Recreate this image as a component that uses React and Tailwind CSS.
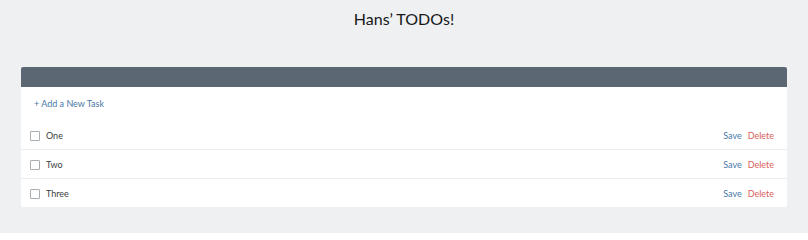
import React from 'react'

const tasks = ['One', 'Two', 'Three']

export default function App() {
  return (
    <div className="min-h-[233px] bg-[#eef0f2] px-[21px] pt-[7px] pb-[26px]" style={{ fontFamily: 'Lato, "Open Sans", sans-serif' }}>
      <h1 className="text-center text-[16px] leading-[24px] font-normal text-[#16181a]">Hans’ TODOs!</h1>
      <div className="mt-[36px] bg-white rounded-[2px] overflow-hidden">
        <div className="h-[20px] bg-[#5b6873]" />
        <div className="h-[34px] flex items-center pl-[13px] pb-[2px]">
          <a className="text-[9px] text-[#4a77a8] leading-none">+ Add a New Task</a>
        </div>
        {tasks.map((t, i) => (
          <div
            key={t}
            className={`flex items-center pt-[2px] pl-[9px] pr-[13px] ${i < tasks.length - 1 ? 'h-[29px] border-b border-[#ebeced]' : 'h-[28px]'}`}
          >
            <span className="w-[10px] h-[10px] border border-[#a9aeb3] rounded-[1px] bg-white" />
            <span className="ml-[6px] text-[9px] text-[#3a3d40]">{t}</span>
            <span className="ml-auto text-[9px] text-[#4a77a8]">Save</span>
            <span className="ml-[6px] text-[9px] text-[#d9605a]">Delete</span>
          </div>
        ))}
      </div>
    </div>
  )
}
